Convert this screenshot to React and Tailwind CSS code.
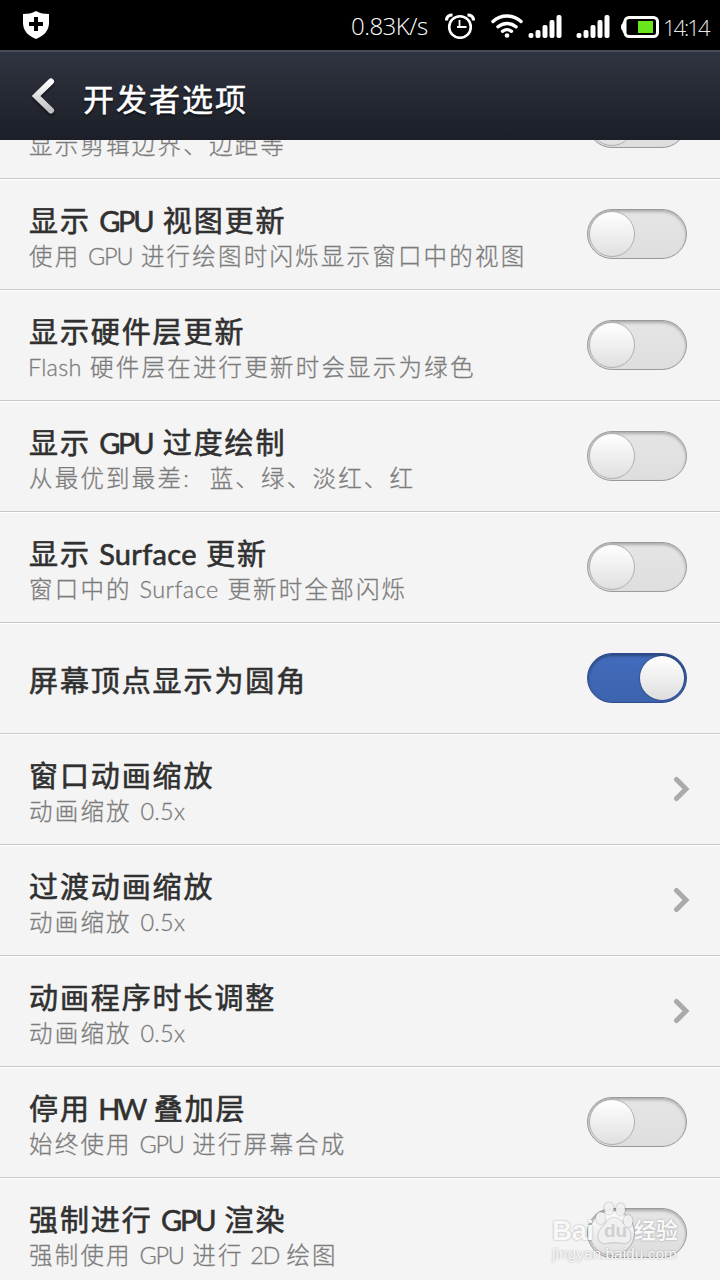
import React from 'react';

const settings = [
    { title: '', subtitle: '显示剪辑边界、边距等', type: 'switch', on: false },
    { title: '显示 GPU 视图更新', subtitle: '使用 GPU 进行绘图时闪烁显示窗口中的视图', type: 'switch', on: false },
    { title: '显示硬件层更新', subtitle: 'Flash 硬件层在进行更新时会显示为绿色', type: 'switch', on: false },
    { title: '显示 GPU 过度绘制', subtitle: '从最优到最差: 蓝、绿、淡红、红', type: 'switch', on: false },
    { title: '显示 Surface 更新', subtitle: '窗口中的 Surface 更新时全部闪烁', type: 'switch', on: false },
    { title: '屏幕顶点显示为圆角', type: 'switch', on: true },
    { title: '窗口动画缩放', subtitle: '动画缩放 0.5x', type: 'link' },
    { title: '过渡动画缩放', subtitle: '动画缩放 0.5x', type: 'link' },
    { title: '动画程序时长调整', subtitle: '动画缩放 0.5x', type: 'link' },
    { title: '停用 HW 叠加层', subtitle: '始终使用 GPU 进行屏幕合成', type: 'switch', on: false },
    { title: '强制进行 GPU 渲染', subtitle: '强制使用 GPU 进行 2D 绘图', type: 'switch', on: false },
];

// Latin words get their own spacing inside Chinese labels
const titleWords = {
    GPU: '-ml-px mr-px tracking-[-2.200px]',
    Surface: '-ml-px tracking-[0.300px]',
    HW: '-ml-[2px] tracking-[-2.900px]',
};

const subtitleWords = {
    GPU: '-ml-px tracking-[-1.200px]',
    Surface: '-ml-px tracking-[0.500px]',
    Flash: '-ml-px tracking-[0.200px]',
    '0.5x': 'tracking-[0.300px]',
    '2D': '-ml-[2px] -mr-px tracking-[-1.500px]',
    ':': 'mr-[10px]',
};

const MixedText = ({ text, words }) =>
    text.split(/([A-Za-z0-9.]+|:)/).map((part, index) =>
        words[part] ? <span key={index} className={words[part]}>{part}</span> : part
    );

const SignalBars = () => (
    <svg className="h-6 w-[34px]" viewBox="0 0 34 24" fill="#fff">
        <rect x="0.5" y="19" width="5" height="5" rx="2" />
        <rect x="7.5" y="16" width="5" height="8" rx="2" />
        <rect x="14.5" y="11" width="5" height="13" rx="2" />
        <rect x="21.5" y="6" width="5" height="18" rx="2" />
        <rect x="28.5" y="1" width="5" height="23" rx="2" />
    </svg>
);

const StatusBar = () => (
    <div className="flex h-[50px] items-center bg-black pl-[23px] text-white">
        <svg className="h-7 w-[26px]" viewBox="0 0 26 28">
            <path d="M13 0C9 2.400 4.500 3 0 3v9c0 8 5.500 13 13 16c7.500-3 13-8 13-16V3C21.500 3 17 2.400 13 0Z" fill="#fff" />
            <path d="M13 6v14M6 13h14" stroke="#000" strokeWidth="4" />
        </svg>
        <span className="ml-[302px] mt-0.5 w-[78px] whitespace-nowrap font-['Open_Sans',sans-serif] text-[24px] font-light tracking-[-0.500px]">0.83K/s</span>
        <svg className="ml-4 mt-0.5 h-[26px] w-[30px]" viewBox="0 0 30 26" fill="none" stroke="#fff">
            <circle cx="15" cy="14" r="10.800" strokeWidth="2.600" />
            <path d="M14.500 7v8M12 14h9.500" strokeWidth="1.800" />
            <path d="M1.500 7.500c0-3.500 2-5.500 6-5.500M28.500 7.500c0-3.500-2-5.500-6-5.500" strokeWidth="3.200" />
        </svg>
        <svg className="ml-4 mt-0.5 h-6 w-8" viewBox="0 0 32 24" fill="none" stroke="#fff" strokeWidth="3.400" strokeLinecap="round">
            <path d="M2 7.500c8-7.300 20-7.300 28 0M7 12.800c5.200-4.500 12.800-4.500 18 0M11.500 17.300c2.700-2 6.300-2 9 0" />
            <circle cx="16" cy="21.500" r="2.300" fill="#fff" stroke="none" />
        </svg>
        <div className="ml-[5px] mt-0.5 flex gap-[14px]">
            <SignalBars />
            <SignalBars />
        </div>
        <svg className="ml-[10px] mt-1 h-[22px] w-[39px]" viewBox="0 0 39 22">
            <path d="M5 4.500C3 5 2.500 6 2.500 7.500C0.500 8 0.500 14 2.500 14.500c0 1.500 0.500 2.500 2.500 3Z" fill="#fff" />
            <rect x="5" y="1.500" width="32.500" height="19" rx="4" fill="none" stroke="#fff" strokeWidth="3" />
            <rect x="18" y="5" width="15" height="12" fill="#69e61b" />
        </svg>
        <span className="ml-1 mt-1 whitespace-nowrap font-['Open_Sans',sans-serif] text-[22px] font-light tracking-[-2px] text-[#e8e8e8]">14:14</span>
    </div>
);

const Header = () => (
    <div className="flex h-[90px] items-center border-t-2 border-[#484c58] bg-linear-to-b from-[#303440] to-[#1c1f27] pl-8">
        <svg className="h-9 w-6 drop-shadow-[0_2px_1px_rgba(0,0,0,0.5)]" viewBox="0 0 24 36" fill="none">
            <defs>
                <linearGradient id="back" x1="0" y1="0" x2="0" y2="1">
                    <stop offset="0" stopColor="#fff" />
                    <stop offset="1" stopColor="#bfc0c5" />
                </linearGradient>
            </defs>
            <path d="M19 3.500L4 18l15 14.500" stroke="url(#back)" strokeWidth="6" strokeLinecap="round" />
        </svg>
        <h1 className="ml-[27px] mt-1 font-['Noto_Sans_CJK_SC',sans-serif] text-[31px] leading-[50px] tracking-[2px] text-white [-webkit-text-stroke:0.5px_#fff] [text-shadow:0_2px_2px_rgba(0,0,0,0.6)]">开发者选项</h1>
    </div>
);

const Switch = ({ on }) => (
    <div
        className={
            on
                ? 'flex h-[50px] w-[100px] items-center justify-end rounded-full border border-[#2e4c8c] bg-linear-to-b from-[#426cbd] to-[#3d63ae] px-[2px] shadow-[inset_0_2px_3px_rgba(0,0,0,0.35)]'
                : 'flex h-[50px] w-[100px] items-center rounded-full border border-[#9a9a9e] bg-linear-to-b from-[#e5e5e5] to-[#dedede] px-[1px] shadow-[inset_0_2px_3px_rgba(0,0,0,0.25)]'
        }
    >
        <div className={on ? 'size-11 rounded-full bg-linear-to-b from-white to-[#dedede] shadow-[0_0_2px_rgba(0,0,0,0.6)]' : 'size-[46px] rounded-full border border-[#b0b0b0] bg-linear-to-b from-white to-[#e0e0e0]'} />
    </div>
);

const Chevron = () => (
    <svg className="-mr-1 h-[26px] w-[18px]" viewBox="0 0 18 26" fill="none">
        <path d="M3.500 3.500l9.500 9.500l-9.500 9.500" stroke="#aaa" strokeWidth="5" strokeLinecap="round" />
    </svg>
);

const SettingRow = ({ item }) => (
    <div className="flex h-[111px] items-center justify-between border-b border-[#c8c8c8] bg-[#f4f4f4] pl-[29px] pr-[33px] shadow-[inset_0_1px_0_#fff]">
        <div className={item.subtitle ? "mt-[7px] whitespace-nowrap font-['Lato','Noto_Sans_CJK_SC',sans-serif]" : "mt-1.5 whitespace-nowrap font-['Lato','Noto_Sans_CJK_SC',sans-serif]"}>
            <div className="h-9 text-[29px] leading-[36px] tracking-[1.900px] text-[#303030] [-webkit-text-stroke:0.600px_#303030]">
                <MixedText text={item.title} words={titleWords} />
            </div>
            {item.subtitle && (
                <div className="text-[23.500px] font-light leading-[34px] tracking-[2.200px] text-[#7c7c7c] [-webkit-text-stroke:0.300px_#7c7c7c]">
                    <MixedText text={item.subtitle} words={subtitleWords} />
                </div>
            )}
        </div>
        {item.type === 'switch' ? <Switch on={item.on} /> : <Chevron />}
    </div>
);

const Watermark = () => (
    <div className="absolute left-[552px] top-[1201px] w-[130px] font-['Liberation_Sans','Noto_Sans_CJK_SC',sans-serif] text-[#f8f8f8] [text-shadow:0_0_2px_rgba(0,0,0,0.350)]">
        <div className="flex h-[45px] items-end">
            <span className="w-[43px] text-[28px] font-bold leading-[30px] tracking-[-0.800px]">Bai</span>
            <div className="relative h-[45px] w-[38px]">
                <svg className="h-full w-full drop-shadow-[0_0_1px_rgba(0,0,0,0.4)]" viewBox="0 0 38 45" fill="#f8f8f8" fillOpacity="0.9">
                    <ellipse cx="5.500" cy="17" rx="4.500" ry="6" />
                    <ellipse cx="14" cy="7.500" rx="4.500" ry="6" />
                    <ellipse cx="25.500" cy="8.500" rx="4.500" ry="6" />
                    <ellipse cx="33" cy="20" rx="4.500" ry="6" />
                    <path d="M19 17c-6 0-8 6-12 10c-5 5-5 15 3 15c4 0 5-1 9-1s6 1 10 1c8 0 8-10 3-15c-4-4-7-10-13-10Z" />
                </svg>
                <span className="absolute left-[9px] top-[18px] text-[19px] font-bold leading-[24px] text-[#cfcfcf] [text-shadow:none]">du</span>
            </div>
            <span className="ml-px text-[22px] font-bold leading-[30px]">经验</span>
        </div>
        <div className="whitespace-nowrap text-[15.500px] leading-4">jingyan.baidu.com</div>
    </div>
);

const App = () => (
    <div className="relative h-[1280px] w-[720px] overflow-hidden bg-[#f4f4f4]">
        <StatusBar />
        <Header />
        <div className="h-[1140px] overflow-hidden">
            <div className="-mt-[72px]">
                {settings.map((item) => (
                    <SettingRow key={item.title} item={item} />
                ))}
            </div>
        </div>
        <Watermark />
    </div>
);

export default App;
